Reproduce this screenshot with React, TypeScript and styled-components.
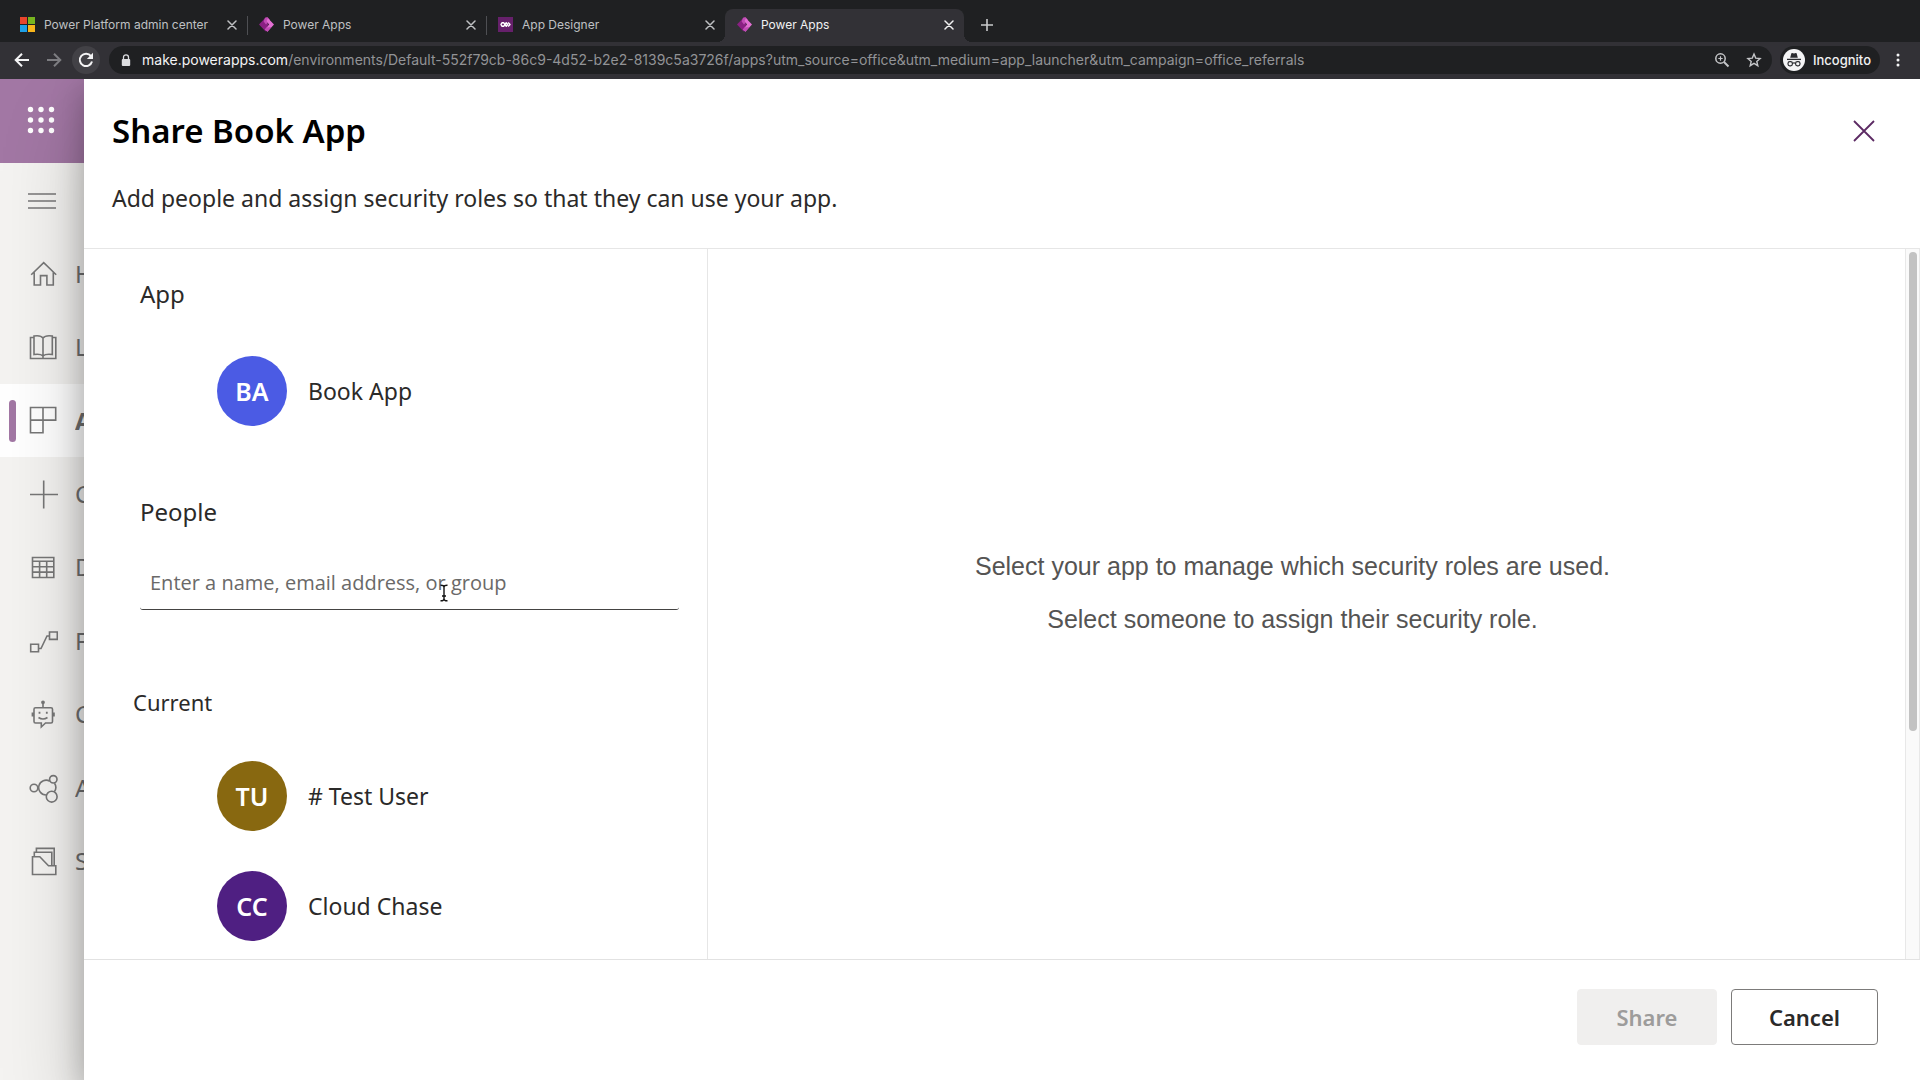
import React from "react";
import styled, { createGlobalStyle, css } from "styled-components";

const UI = '"Noto Sans", "Open Sans", sans-serif';
const CHROME = 'Inter, Roboto, sans-serif';

const GlobalStyle = createGlobalStyle`
  *, *::before, *::after { box-sizing: border-box; }
  body { margin: 0; font-family: ${UI}; color: #2b2a29; background: #fff; }
  button { font: inherit; color: inherit; border: 0; padding: 0; background: none; cursor: pointer; }
  h1, h2, p, ul { margin: 0; padding: 0; font-weight: 400; }
  ul { list-style: none; }
  svg { display: block; flex: none; }
`;

const Window = styled.div`
  display: flex;
  flex-direction: column;
  height: 100vh;
  overflow: hidden;
`;

/* ---------- browser chrome ---------- */

const BrowserBar = styled.header`
  position: relative;
  z-index: 2;
  font-family: ${CHROME};
  background: #323136;
`;

const TabStrip = styled.div`
  display: flex;
  align-items: stretch;
  height: 42px;
  padding: 9px 8px 0;
  background: #1f2022;
`;

const Tab = styled.div<{ $active?: boolean; $divider?: boolean }>`
  position: relative;
  display: flex;
  align-items: center;
  flex: 0 1 239px;
  min-width: 0;
  gap: 9px;
  padding: 0 7px 2px 12px;
  font-size: 12px;
  line-height: 16px;
  color: #bfc0c3;

  ${({ $divider }) =>
    $divider &&
    css`
      &::after {
        content: "";
        position: absolute;
        right: -1px;
        top: 7px;
        width: 1px;
        height: 19px;
        background: #4e4f53;
      }
    `}

  ${({ $active }) =>
    $active &&
    css`
      color: #f1f1f2;
      background: #323136;
      border-radius: 8px 8px 0 0;

      &::before,
      &::after {
        content: "";
        position: absolute;
        bottom: 0;
        width: 8px;
        height: 8px;
      }
      &::before {
        right: 100%;
        background: radial-gradient(circle at 0 0, transparent 8px, #323136 8px);
      }
      &::after {
        left: 100%;
        background: radial-gradient(circle at 100% 0, transparent 8px, #323136 8px);
      }
    `}
`;

const TabTitle = styled.span`
  flex: 1;
  overflow: hidden;
  white-space: nowrap;
`;

const IconButton = styled.button<{ $size?: number; $filled?: boolean }>`
  display: grid;
  place-items: center;
  flex: none;
  width: ${({ $size = 16 }) => $size}px;
  height: ${({ $size = 16 }) => $size}px;
  border-radius: 50%;
  background: ${({ $filled }) => ($filled ? "#424146" : "none")};
`;

const NewTab = styled(IconButton)`
  align-self: center;
  margin: 0 0 2px 15px;
  color: #c9cacc;
`;

const Toolbar = styled.div`
  display: flex;
  align-items: center;
  gap: 4px;
  height: 37px;
  padding: 0 12px 1px 8px;
  color: #f1f1f2;
`;

const AddressBar = styled.div`
  display: flex;
  align-items: center;
  flex: 1;
  min-width: 0;
  gap: 16px;
  height: 28px;
  margin-left: 5px;
  padding: 0 10px 0 12px;
  border-radius: 14px;
  background: #1f2022;
  color: #c5c6c9;
`;

const Address = styled.div`
  flex: 1;
  min-width: 0;
  overflow: hidden;
  white-space: nowrap;
  margin-left: -5px;
  font-size: 14px;
  line-height: 20px;
  color: #929396;
`;

const Host = styled.span`
  color: #f4f4f5;
`;

const Incognito = styled.div`
  display: flex;
  align-items: center;
  gap: 8px;
  height: 28px;
  margin: 0 4px;
  padding: 0 9px 0 3px;
  border-radius: 14px;
  background: #1f2022;
  font-size: 13px;
  line-height: 20px;
  font-weight: 500;
`;

/* ---------- maker portal behind the panel ---------- */

const Page = styled.div`
  display: flex;
  flex: 1;
  min-height: 0;
`;

const Sidebar = styled.aside`
  flex: none;
  width: 84px;
  overflow: hidden;
  color: #6f6f6f;
  background: #f4f3f1;
`;

const Waffle = styled.button`
  display: grid;
  align-items: center;
  width: 100%;
  height: 84px;
  padding-left: 26px;
  background: #a277a4;
`;

const MenuToggle = styled.button`
  display: grid;
  align-items: center;
  width: 100%;
  height: 74px;
  padding: 2px 0 0 28px;
`;

const NavList = styled.ul`
  display: flex;
  flex-direction: column;
  height: 661px;
`;

const NavItem = styled.li`
  display: flex;
  flex: 1;
`;

const NavLink = styled.a<{ $selected?: boolean }>`
  display: flex;
  align-items: center;
  flex: 1;
  min-width: 0;
  gap: 17px;
  padding-left: 28px;
  font-size: 24px;
  line-height: 32px;
  white-space: nowrap;
  text-decoration: none;
  color: inherit;
  font-weight: ${({ $selected }) => ($selected ? 700 : 400)};

  ${({ $selected }) =>
    $selected &&
    css`
      gap: 12px;
      padding-left: 9px;
      background: #fff;

      svg + span {
        margin-left: 5px;
      }
    `}
`;

const NavLabel = styled.span`
  flex: 1;
  min-width: 0;
  overflow: hidden;
`;

const Marker = styled.i`
  flex: none;
  width: 7px;
  height: 42px;
  border-radius: 4px;
  background: #a277a4;
`;

/* ---------- share panel ---------- */

const Panel = styled.section`
  position: relative;
  z-index: 1;
  display: flex;
  flex-direction: column;
  flex: 1;
  min-width: 0;
  background: #fff;
  box-shadow: 0 40px 80px rgba(0, 0, 0, 0.2), 0 10px 30px rgba(0, 0, 0, 0.26);
`;

const PanelHeader = styled.header`
  padding: 30px 42px 34px 28px;
  border-bottom: 1px solid #e6e6e6;
`;

const TitleRow = styled.div`
  display: flex;
  align-items: center;
  justify-content: space-between;
`;

const Title = styled.h1`
  font-size: 33px;
  line-height: 44px;
  font-weight: 600;
  color: #000;
`;

const Subtitle = styled.p`
  margin-top: 29px;
  font-size: 23px;
  line-height: 32px;
`;

const PanelBody = styled.div`
  display: grid;
  grid-template-columns: 624px 1fr 15px;
  flex: 1;
  min-height: 0;
`;

const PeoplePane = styled.div`
  padding: 29px 28px 0 56px;
  border-right: 1px solid #e6e6e6;
  overflow: hidden;
`;

const SectionTitle = styled.h2`
  margin-bottom: 46px;
  font-size: 24px;
  line-height: 32px;
`;

const CurrentTitle = styled.h2`
  margin: 76px 0 43px -7px;
  font-size: 22px;
  line-height: 32px;
`;

const PersonaList = styled.ul`
  display: flex;
  flex-direction: column;
  gap: 40px;
  padding-left: 77px;
`;

const Persona = styled.button`
  display: flex;
  align-items: center;
  gap: 21px;
  font-size: 23px;
  line-height: 32px;
`;

const Avatar = styled.span<{ $color: string }>`
  display: grid;
  place-items: center;
  width: 70px;
  height: 70px;
  border-radius: 50%;
  background: ${({ $color }) => $color};
  color: #fff;
  font-size: 25px;
  line-height: 32px;
  font-weight: 600;
`;

const PeopleLabel = styled.label`
  display: block;
  margin-top: 70px;
  font-size: 24px;
  line-height: 32px;
`;

const PickerField = styled.div`
  position: relative;
  margin-top: 28px;
`;

const PickerInput = styled.input`
  display: block;
  width: 100%;
  height: 54px;
  padding: 0 10px;
  border: 0;
  border-bottom: 1px solid #444342;
  border-radius: 3px;
  outline: 0;
  background: #fff;
  font-family: "Open Sans", "Noto Sans", sans-serif;
  font-size: 20px;
  line-height: 28px;
  color: #2b2a29;

  &::placeholder {
    color: #6a6968;
    opacity: 1;
  }
`;

const Pointer = styled.svg`
  position: absolute;
  left: 299px;
  top: 28px;
`;

const RolePane = styled.div`
  display: flex;
  flex-direction: column;
  align-items: center;
  justify-content: center;
  gap: 21px;
  padding: 0 28px 24px 0;
  font-family: "Liberation Sans", Arial, sans-serif;
  font-size: 25px;
  line-height: 32px;
  color: #555453;
`;

const ScrollTrack = styled.div`
  padding: 3px 2px 3px 3px;
  border: solid #e8e8e8;
  border-width: 0 1px;
  background: #fafafa;
`;

const ScrollThumb = styled.div`
  height: 68%;
  border-radius: 4px;
  background: #c2c2c2;
`;

const PanelFooter = styled.footer`
  display: flex;
  align-items: flex-start;
  justify-content: flex-end;
  gap: 14px;
  height: 121px;
  padding: 29px 42px 0 28px;
  border-top: 1px solid #e2e2e2;
`;

const ActionButton = styled.button`
  min-width: 140px;
  height: 56px;
  padding: 0 37px;
  border: 1px solid #7c7b7a;
  border-radius: 4px;
  font-size: 22px;
  line-height: 30px;
  font-weight: 600;

  &:disabled {
    border-color: #f0efee;
    background: #f0efee;
    color: #9d9c9b;
    cursor: default;
  }
`;

/* ---------- drawings ---------- */

const CloseGlyph = () => (
  <svg width="10" height="10" viewBox="0 0 10 10" stroke="currentColor" strokeWidth="1.5" strokeLinecap="round">
    <path d="M1 1l8 8M9 1l-8 8" />
  </svg>
);

const MicrosoftLogo = () => (
  <svg width="15" height="15" viewBox="0 0 15 15">
    <path fill="#e8452c" d="M0 0h7v7H0z" />
    <path fill="#77b41f" d="M8 0h7v7H8z" />
    <path fill="#1ea0e6" d="M0 8h7v7H0z" />
    <path fill="#f8b51b" d="M8 8h7v7H8z" />
  </svg>
);

const PowerAppsLogo = () => (
  <svg width="15" height="15" viewBox="0 0 15 15">
    <path fill="#8a1f83" d="M6.6.5L0 7.5l6.6 7 2.6-7z" />
    <path fill="#c04bb4" d="M6 .8L8.4 0 11 3 7 7.5 4.6 4.6z" />
    <path fill="#e26fd3" d="M9 1.2l6 6.3-6.6 7.3L6 12.4l4-4.9L7.6 4z" />
    <path fill="#c24ab6" d="M7.6 10.5L12.4 10l-4 4.8L6 12.4z" />
  </svg>
);

const DesignerLogo = () => (
  <svg width="15" height="15" viewBox="0 0 16 16">
    <path fill="#66206b" d="M0 0h16v16H0z" />
    <g fill="none" stroke="#fff" strokeWidth="1.5" strokeLinejoin="round">
      <path d="M3.2 8l1.2-1.9h1.6L7.300 8 6 9.900H4.400z" />
      <path d="M7.300 8l1.500-1.900L10.200 8l-1.400 1.900zM10.800 5.900L12.800 8l-2 2.100" />
    </g>
  </svg>
);

const BackGlyph = ({ color, flip }: { color: string; flip?: boolean }) => (
  <svg width="16" height="16" viewBox="0 0 16 16" fill="none" stroke={color} strokeWidth="2">
    {flip ? <path d="M1 8h13M8 1.700L14.300 8 8 14.300" /> : <path d="M15 8H2M8 1.700L1.700 8 8 14.300" />}
  </svg>
);

const ReloadGlyph = () => (
  <svg width="16" height="16" viewBox="0 0 16 16">
    <path d="M13 4.200A6.200 6.200 0 1 0 14 9.500" fill="none" stroke="#f4f4f5" strokeWidth="2" />
    <path d="M15 .8V7H8.800z" fill="#f4f4f5" />
  </svg>
);

const LockGlyph = () => (
  <svg width="10" height="13" viewBox="0 0 10 13">
    <rect x="0.800" y="5" width="8.400" height="7" rx="1" fill="#dcdde0" />
    <path d="M2.500 5.500V3.300a2.500 2.500 0 0 1 5 0v2.200" fill="none" stroke="#dcdde0" strokeWidth="1.300" />
  </svg>
);

const ZoomGlyph = () => (
  <svg width="16" height="16" viewBox="0 0 16 16" fill="none" stroke="currentColor" strokeWidth="1.500">
    <circle cx="6.500" cy="6.500" r="4.700" />
    <path d="M10 10l4.500 4.500" strokeWidth="2" />
    <path d="M4.300 6.500h4.400M6.500 4.300v4.400" strokeWidth="1.200" />
  </svg>
);

const StarGlyph = () => (
  <svg width="16" height="16" viewBox="0 0 16 16" fill="none" stroke="currentColor" strokeWidth="1.400" strokeLinejoin="miter">
    <path d="M8 2l1.700 4.100 4.400.4-3.300 2.900 1 4.300L8 11.400l-3.800 2.300 1-4.300L1.900 6.500l4.400-.4z" />
  </svg>
);

const IncognitoGlyph = () => (
  <svg width="22" height="22" viewBox="0 0 22 22">
    <circle cx="11" cy="11" r="11" fill="#f4f4f5" />
    <path d="M7.200 8.800L8.300 4.400q.2-.6.800-.5l1.900.5 1.900-.5q.6-.1.800.5l1.100 4.400z" fill="#2b2c30" />
    <path d="M4 10.400h14" stroke="#2b2c30" strokeWidth="1.300" />
    <g fill="none" stroke="#2b2c30" strokeWidth="1.200">
      <rect x="5" y="12.600" width="4.400" height="4.200" rx="1.800" />
      <rect x="12.600" y="12.600" width="4.400" height="4.200" rx="1.800" />
      <path d="M9.400 14.300q1.600-.8 3.200 0" />
    </g>
  </svg>
);

const MoreGlyph = () => (
  <svg width="4" height="14" viewBox="0 0 4 14" fill="#f4f4f5">
    <circle cx="2" cy="2" r="1.500" />
    <circle cx="2" cy="7" r="1.500" />
    <circle cx="2" cy="12" r="1.500" />
  </svg>
);

const WaffleGlyph = () => (
  <svg width="30" height="30" viewBox="0 0 30 30" fill="#fff">
    {[4.5, 15, 25.5].map((y) => [4.5, 15, 25.5].map((x) => <circle key={`${x}-${y}`} cx={x} cy={y - 1} r="2.700" />))}
  </svg>
);

const MenuGlyph = () => (
  <svg width="28" height="18" viewBox="0 0 28 18" stroke="#777" strokeWidth="1.600">
    <path d="M0 2h28M0 9h28M0 16h28" />
  </svg>
);

const DismissGlyph = () => (
  <svg width="28" height="28" viewBox="0 0 28 28" stroke="#5c2a63" strokeWidth="1.800">
    <path d="M4 4l20 20M24 4L4 24" />
  </svg>
);

const NavGlyph = ({ children }: { children: React.ReactNode }) => (
  <svg width="30" height="30" viewBox="0 0 30 30" fill="none" stroke="#777" strokeWidth="1.600">
    {children}
  </svg>
);

const navItems: { label: string; selected?: boolean; glyph: React.ReactNode }[] = [
  {
    label: "Home",
    glyph: <path d="M3.200 15.800L15.700 3.600l12.500 12.200M6.200 13.500V26h6.300V16.600h6.400V26h6.400V13.500" />,
  },
  {
    label: "Learn",
    glyph: (
      <path d="M6 5.500H2.500V26.500h25.300V5.500h-3.500M15 6c-1.500-2-5-2.600-9-2v18.500c4-.5 7.500 0 9 1.500 1.500-1.500 5-2 9.300-1.500V4c-4.300-.6-7.800 0-9.300 2zM15 6v20" />
    ),
  },
  { label: "Apps", selected: true, glyph: <path d="M2.500 1.500h25.200v12.600H2.500zM15 1.500v25.200H2.500V14.100" /> },
  { label: "Create", glyph: <path d="M15.700 1.500v28M2 15.500h28" /> },
  {
    label: "Data",
    glyph: <path d="M4.500 5.500h21.300v20H4.500zM4.500 9.300h21.300M4.500 14.700h21.300M4.500 20.100h21.300M11.600 9.300v16.200M18.700 9.300v16.200" />,
  },
  {
    label: "Flows",
    glyph: <path d="M2.700 18.300h7.800v7.400H2.700zM21.500 6h7.800v7.400h-7.800zM10.500 22.500H13L19 10h2.500" />,
  },
  {
    label: "Chatbots",
    glyph: (
      <>
        <circle cx="15" cy="3.300" r="1.100" fill="#777" />
        <path d="M15 3.500v5M7.500 8.700H23q1.500 0 1.500 1.500v12.300q0 1.500-1.500 1.500h-5.500L13.300 28v-4H7.500Q6 24 6 22.500V10.200q0-1.500 1.500-1.500zM4.400 13.500v4M26 13.500v4M10.500 18.500q4.500 3 9 0" />
        <path d="M11.500 12.800v2M18.800 12.800v2" strokeWidth="1.800" />
      </>
    ),
  },
  {
    label: "AI Builder",
    glyph: (
      <>
        <circle cx="6" cy="15" r="3.800" />
        <path d="M21.800 8.200A7.400 7.400 0 1 0 18 22M26.300 18.800A7.400 7.400 0 0 0 26.500 10.300" />
        <circle cx="25.300" cy="6.300" r="3.700" />
        <circle cx="23.700" cy="23.700" r="5.400" />
      </>
    ),
  },
  {
    label: "Solutions",
    glyph: (
      <path d="M4.500 10.800h7.300l8.700 8.900h7.300v8.800H4.500zM6.300 10.800V6.200h17.500v13.500M8.400 6.200V2.400h17.800v17.300" />
    ),
  },
];

/* ---------- pieces ---------- */

const tabs = [
  { title: "Power Platform admin center", logo: <MicrosoftLogo />, divider: true },
  { title: "Power Apps", logo: <PowerAppsLogo />, divider: true },
  { title: "App Designer", logo: <DesignerLogo /> },
  { title: "Power Apps", logo: <PowerAppsLogo />, active: true },
];

const PersonaRow = ({ initials, color, name }: { initials: string; color: string; name: string }) => (
  <li>
    <Persona type="button">
      <Avatar $color={color}>{initials}</Avatar>
      {name}
    </Persona>
  </li>
);

export default function App() {
  return (
    <Window>
      <GlobalStyle />
      <BrowserBar>
        <TabStrip>
          {tabs.map((tab, i) => (
            <Tab key={i} $active={tab.active} $divider={tab.divider}>
              {tab.logo}
              <TabTitle>{tab.title}</TabTitle>
              <IconButton type="button" aria-label="Close tab">
                <CloseGlyph />
              </IconButton>
            </Tab>
          ))}
          <NewTab type="button" aria-label="New tab">
            <svg width="12" height="12" viewBox="0 0 12 12" stroke="currentColor" strokeWidth="1.600">
              <path d="M6 0v12M0 6h12" />
            </svg>
          </NewTab>
        </TabStrip>
        <Toolbar>
          <IconButton type="button" $size={28} aria-label="Back">
            <BackGlyph color="#f4f4f5" />
          </IconButton>
          <IconButton type="button" $size={28} aria-label="Forward">
            <BackGlyph color="#7d7d81" flip />
          </IconButton>
          <IconButton type="button" $size={28} $filled aria-label="Reload">
            <ReloadGlyph />
          </IconButton>
          <AddressBar>
            <LockGlyph />
            <Address>
              <Host>make.powerapps.com</Host>
              /environments/Default-552f79cb-86c9-4d52-b2e2-8139c5a3726f/apps?utm_source=office&amp;utm_medium=app_launcher&amp;utm_campaign=office_referrals
            </Address>
            <IconButton type="button" aria-label="Zoom">
              <ZoomGlyph />
            </IconButton>
            <IconButton type="button" aria-label="Bookmark">
              <StarGlyph />
            </IconButton>
          </AddressBar>
          <Incognito>
            <IncognitoGlyph />
            Incognito
          </Incognito>
          <IconButton type="button" $size={20} aria-label="Menu">
            <MoreGlyph />
          </IconButton>
        </Toolbar>
      </BrowserBar>

      <Page>
        <Sidebar>
          <Waffle type="button" aria-label="App launcher">
            <WaffleGlyph />
          </Waffle>
          <MenuToggle type="button" aria-label="Collapse navigation">
            <MenuGlyph />
          </MenuToggle>
          <nav>
            <NavList>
              {navItems.map((item) => (
                <NavItem key={item.label}>
                  <NavLink href="#" $selected={item.selected}>
                    {item.selected && <Marker />}
                    <NavGlyph>{item.glyph}</NavGlyph>
                    <NavLabel>{item.label}</NavLabel>
                  </NavLink>
                </NavItem>
              ))}
            </NavList>
          </nav>
        </Sidebar>

        <Panel role="dialog" aria-labelledby="share-title">
          <PanelHeader>
            <TitleRow>
              <Title id="share-title">Share Book App</Title>
              <IconButton type="button" $size={28} aria-label="Close">
                <DismissGlyph />
              </IconButton>
            </TitleRow>
            <Subtitle>Add people and assign security roles so that they can use your app.</Subtitle>
          </PanelHeader>

          <PanelBody>
            <PeoplePane>
              <SectionTitle>App</SectionTitle>
              <PersonaList>
                <PersonaRow initials="BA" color="#4b5be4" name="Book App" />
              </PersonaList>

              <PeopleLabel htmlFor="people-picker">People</PeopleLabel>
              <PickerField>
                <PickerInput id="people-picker" type="text" placeholder="Enter a name, email address, or group" />
                <Pointer width="10" height="18" viewBox="0 0 10 18" fill="none" stroke="#111" strokeWidth="1.400" aria-hidden="true">
                  <path d="M1.500 1.200Q5 1 5 3.500v11Q5 17 1.500 16.800M8.500 1.200Q5 1 5 3.500M5 14.500Q5 17 8.500 16.800M3 12h4" />
                </Pointer>
              </PickerField>

              <CurrentTitle>Current</CurrentTitle>
              <PersonaList>
                <PersonaRow initials="TU" color="#886810" name="# Test User" />
                <PersonaRow initials="CC" color="#4f1f82" name="Cloud Chase" />
              </PersonaList>
            </PeoplePane>
            <RolePane>
              <p>Select your app to manage which security roles are used.</p>
              <p>Select someone to assign their security role.</p>
            </RolePane>
            <ScrollTrack>
              <ScrollThumb />
            </ScrollTrack>
          </PanelBody>

          <PanelFooter>
            <ActionButton type="button" disabled>
              Share
            </ActionButton>
            <ActionButton type="button">Cancel</ActionButton>
          </PanelFooter>
        </Panel>
      </Page>
    </Window>
  );
}
